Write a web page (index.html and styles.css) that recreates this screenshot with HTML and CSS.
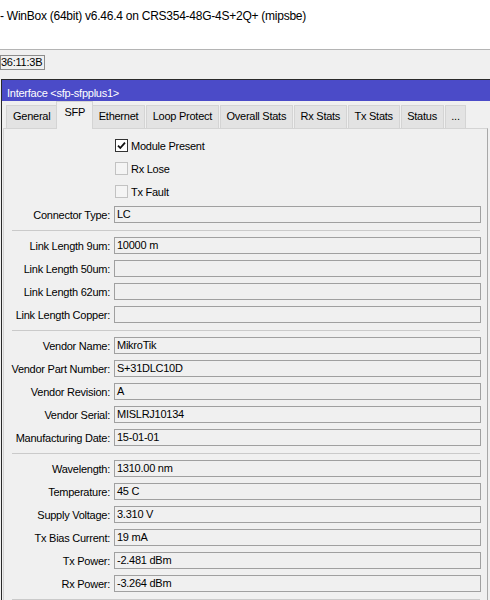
FILE: index.html
```html
<!DOCTYPE html>
<html>
<head>
<meta charset="utf-8">
<link rel="stylesheet" href="styles.css">
</head>
<body>
<div class="apptitle">- WinBox (64bit) v6.46.4 on CRS354-48G-4S+2Q+ (mipsbe)</div>
<div class="toolbar"><span class="mac">36:11:3B</span></div>
<div class="window">
  <div class="wtitle">Interface &lt;sfp-sfpplus1&gt;</div>
  <div class="tabs">
    <div class="tab">General</div>
    <div class="tab active">SFP</div>
    <div class="tab">Ethernet</div>
    <div class="tab">Loop Protect</div>
    <div class="tab">Overall Stats</div>
    <div class="tab">Rx Stats</div>
    <div class="tab">Tx Stats</div>
    <div class="tab">Status</div>
    <div class="tab">...</div>
  </div>
  <div class="panel">
    <div class="row"><span class="lbl"></span><span class="chk on"><svg viewBox="0 0 13 13" width="13" height="13"><path d="M3 6.6 L5.3 9 L10 3.6" fill="none" stroke="#111" stroke-width="1.8"/></svg></span><span class="ctext">Module Present</span></div>
    <div class="row"><span class="lbl"></span><span class="chk"></span><span class="ctext">Rx Lose</span></div>
    <div class="row"><span class="lbl"></span><span class="chk"></span><span class="ctext">Tx Fault</span></div>
    <div class="row"><span class="lbl">Connector Type:</span><span class="fld">LC</span></div>
    <div class="sep"></div>
    <div class="row"><span class="lbl">Link Length 9um:</span><span class="fld">10000 m</span></div>
    <div class="row"><span class="lbl">Link Length 50um:</span><span class="fld"></span></div>
    <div class="row"><span class="lbl">Link Length 62um:</span><span class="fld"></span></div>
    <div class="row"><span class="lbl">Link Length Copper:</span><span class="fld"></span></div>
    <div class="sep"></div>
    <div class="row"><span class="lbl">Vendor Name:</span><span class="fld">MikroTik</span></div>
    <div class="row"><span class="lbl">Vendor Part Number:</span><span class="fld">S+31DLC10D</span></div>
    <div class="row"><span class="lbl">Vendor Revision:</span><span class="fld">A</span></div>
    <div class="row"><span class="lbl">Vendor Serial:</span><span class="fld">MISLRJ10134</span></div>
    <div class="row"><span class="lbl">Manufacturing Date:</span><span class="fld">15-01-01</span></div>
    <div class="sep"></div>
    <div class="row"><span class="lbl">Wavelength:</span><span class="fld">1310.00 nm</span></div>
    <div class="row"><span class="lbl">Temperature:</span><span class="fld">45 C</span></div>
    <div class="row"><span class="lbl">Supply Voltage:</span><span class="fld">3.310 V</span></div>
    <div class="row"><span class="lbl">Tx Bias Current:</span><span class="fld">19 mA</span></div>
    <div class="row"><span class="lbl">Tx Power:</span><span class="fld">-2.481 dBm</span></div>
    <div class="row"><span class="lbl">Rx Power:</span><span class="fld">-3.264 dBm</span></div>
    <div class="sep"></div>
  </div>
</div>
</body>
</html>
```
FILE: styles.css
```css
html, body {
  margin: 0;
  padding: 0;
}
body {
  width: 490px;
  height: 600px;
  overflow: hidden;
  background: #f0f0f0;
  font-family: "Liberation Sans", Arial, sans-serif;
  font-size: 11px;
  letter-spacing: -0.25px;
  color: #000;
}
.apptitle {
  height: 50px;
  box-sizing: border-box;
  background: #fff;
  border-bottom: 1px solid #b4b4b4;
  padding-top: 9px;
  line-height: 14px;
  font-size: 12px;
  letter-spacing: -0.25px;
  white-space: nowrap;
}
.toolbar {
  height: 29px;
  box-sizing: border-box;
  padding-top: 5px;
}
.mac {
  display: inline-block;
  height: 15px;
  box-sizing: border-box;
  border: 1px solid #8c8c8c;
  padding: 0 2px 0 0;
  line-height: 13px;
  font-size: 11px;
}
.window {
  width: 560px;
  margin-left: 1px;
  border-left: 1px solid #2a2a2a;
  border-top: 1px solid #2a2a2a;
  background: #f0f0f0;
}
.wtitle {
  height: 21px;
  box-sizing: border-box;
  background: #4b4bc8;
  color: #fff;
  padding: 6px 0 0 5px;
  line-height: 14px;
  white-space: nowrap;
}
.tabs {
  display: flex;
  align-items: flex-end;
  height: 27px;
  padding-left: 4px;
  position: relative;
  z-index: 1;
}
.tab {
  height: 23px;
  box-sizing: border-box;
  padding: 0 6px;
  line-height: 21px;
  background: #e3e3e3;
  border: 1px solid #d4d4d4;
  border-bottom: none;
  margin-right: 1px;
  white-space: nowrap;
}
.tab.active {
  height: 28px;
  line-height: 21px;
  background: #f0f0f0;
  padding: 0 7px;
  margin: 0 0 -1px -2px;
}
.tab.active + .tab {
  margin-left: -1px;
}
.tab.active ~ .tab {
  padding: 0 5.7px;
}
.panel {
  width: 485px;
  margin-left: 1px;
  box-sizing: border-box;
  border-top: 1px solid #d4d4d4;
  border-left: 1px solid #d4d4d4;
  border-right: 1px solid #a8a8a8;
  padding-top: 5px;
  height: 480px;
}
.row {
  display: flex;
  align-items: center;
  height: 23px;
}
.lbl {
  width: 106px;
  text-align: right;
  white-space: nowrap;
  margin-right: 4px;
}
.fld {
  width: 367px;
  height: 17px;
  box-sizing: border-box;
  border: 1px solid #a0a0a0;
  padding-left: 2px;
  line-height: 15px;
  white-space: nowrap;
}
.chk {
  width: 13px;
  height: 13px;
  box-sizing: border-box;
  border: 1px solid #c2c2c2;
  background: #f4f4f4;
  margin-left: 1px;
  display: flex;
}
.chk.on {
  border-color: #333;
  background: #fff;
}
.chk svg {
  margin: -1px;
}
.ctext {
  margin-left: 3px;
}
.sep {
  height: 8px;
  margin-left: 8px;
  width: 468px;
  display: flex;
  align-items: center;
}
.sep::before {
  content: "";
  flex: 1;
  height: 1px;
  background: #cacaca;
}
```
